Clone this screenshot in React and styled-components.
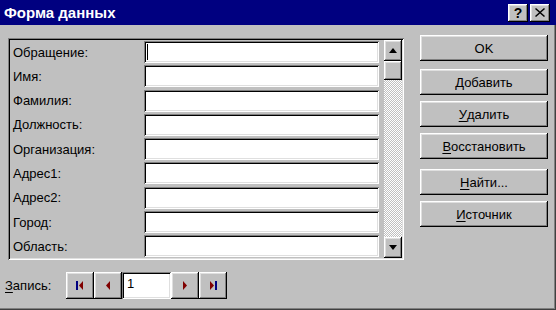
import React from 'react';
import styled, {createGlobalStyle} from 'styled-components';

const GlobalStyle = createGlobalStyle`
  html, body {
    margin: 0;
    padding: 0;
    background: #c0c0c0;
  }
  body {
    font-family: "Liberation Sans", Arial, sans-serif;
  }
`;

// classic 3D bevels
const raised = `
  box-shadow: inset -1px -1px #000, inset 1px 1px #fff, inset -2px -2px #808080, inset 2px 2px #dfdfdf;
`;
const sunken = `
  box-shadow: inset 1px 1px #808080, inset -1px -1px #fff, inset 2px 2px #000, inset -2px -2px #dfdfdf;
`;

const Window = styled.div`
  width: 556px;
  height: 310px;
  box-sizing: border-box;
  background: #c0c0c0;
  display: flex;
  flex-direction: column;
  box-shadow: inset -1px -1px #404040, inset -2px -2px #808080;
  overflow: hidden;
`;

const TitleBar = styled.div`
  height: 25px;
  flex: none;
  display: flex;
  align-items: center;
  padding: 0 6px 0 4px;
  background: #000080;
  color: #fff;
  font-weight: bold;
  font-size: 15px;
`;

const TitleText = styled.div`
  flex: 1;
`;

const TitleBtn = styled.div`
  width: 20px;
  height: 18px;
  margin-left: 2px;
  background: #c0c0c0;
  ${raised};
  display: flex;
  align-items: center;
  justify-content: center;
  color: #000;
  font-weight: bold;
  font-size: 14px;
`;

const Body = styled.div`
  display: flex;
  padding: 10px 0 0 8px;
`;

const LeftCol = styled.div`
  width: 396px;
  display: flex;
  flex-direction: column;
`;

const Panel = styled.div`
  margin-top: 3px;
  width: 396px;
  height: 222px;
  box-sizing: border-box;
  padding: 2px;
  ${sunken};
  display: flex;
`;

const FieldArea = styled.div`
  flex: 1;
  padding: 1px 5px 0 3px;
  overflow: hidden;
`;

const Row = styled.div`
  display: flex;
  align-items: center;
  height: 22px;
  margin-bottom: 2.3px;
`;

const Label = styled.div`
  width: 131px;
  font-size: 13px;
  color: #000;
`;

const Field = styled.div`
  width: 235px;
  height: 22px;
  box-sizing: border-box;
  background: #fff;
  ${sunken};
  padding: 3px 3px;
  display: flex;
`;

const Caret = styled.div`
  width: 1px;
  background: #000;
`;

const ScrollBar = styled.div`
  width: 18px;
  display: flex;
  flex-direction: column;
`;

const ScrollBtn = styled.div`
  height: ${p => p.h}px;
  flex: none;
  box-sizing: border-box;
  background: #c0c0c0;
  ${raised};
  display: flex;
  align-items: center;
  justify-content: center;
`;

const Track = styled.div`
  flex: 1;
  background-image: repeating-conic-gradient(#c0c0c0 0 25%, #fff 0 50%);
  background-size: 2px 2px;
`;

const RightCol = styled.div`
  margin-left: 16px;
  width: 128px;
  display: flex;
  flex-direction: column;
`;

const Button = styled.div`
  height: 26px;
  box-sizing: border-box;
  margin-top: ${p => p.gap}px;
  background: #c0c0c0;
  ${raised};
  display: flex;
  align-items: center;
  justify-content: center;
  font-size: 13px;
  color: #000;
`;

const Mn = styled.span`
  text-decoration: underline;
  text-underline-offset: 2px;
`;

const RecordRow = styled.div`
  display: flex;
  align-items: center;
  margin: 12px 0 0 -3px;
  height: 27px;
`;

const RecordLabel = styled.div`
  width: 61px;
  font-size: 13px;
  color: #000;
`;

const NavBtn = styled.div`
  width: 28px;
  height: 27px;
  box-sizing: border-box;
  background: #c0c0c0;
  ${raised};
  display: flex;
  align-items: center;
  justify-content: center;
`;

const RecordInput = styled.div`
  width: 49px;
  height: 27px;
  box-sizing: border-box;
  background: #fff;
  ${sunken};
  padding: 4px 5px;
  font-size: 13px;
  color: #000;
`;

const labels = ['Обращение:', 'Имя:', 'Фамилия:', 'Должность:', 'Организация:', 'Адрес1:', 'Адрес2:', 'Город:', 'Область:'];

const NAVY = '#000080';
const MAROON = '#800000';

function NavIcon({kind}) {
  return (
    <svg width="10" height="9" viewBox="0 0 10 9">
      {kind === 'first' && <>
        <rect x="1" y="0" width="2" height="9" fill={NAVY}/>
        <polygon points="8,0 4,4.5 8,9" fill={MAROON}/>
      </>}
      {kind === 'prev' && <polygon points="7,0 3,4.5 7,9" fill={MAROON}/>}
      {kind === 'next' && <polygon points="3,0 7,4.5 3,9" fill={MAROON}/>}
      {kind === 'last' && <>
        <polygon points="2,0 6,4.5 2,9" fill={MAROON}/>
        <rect x="7" y="0" width="2" height="9" fill={NAVY}/>
      </>}
    </svg>
  );
}

export default function App() {
  return (
    <>
      <GlobalStyle/>
      <Window>
        <TitleBar>
          <TitleText>Форма данных</TitleText>
          <TitleBtn>?</TitleBtn>
          <TitleBtn>
            <svg width="10" height="9" viewBox="0 0 10 9">
              <path d="M1 0 L5 3.5 L9 0 L10 1 L6 4.5 L10 8 L9 9 L5 5.5 L1 9 L0 8 L4 4.5 L0 1 Z" fill="#000"/>
            </svg>
          </TitleBtn>
        </TitleBar>
        <Body>
          <LeftCol>
            <Panel>
              <FieldArea>
                {labels.map((l, i) => (
                  <Row key={l}>
                    <Label>{l}</Label>
                    <Field>{i === 0 && <Caret/>}</Field>
                  </Row>
                ))}
              </FieldArea>
              <ScrollBar>
                <ScrollBtn h={21}>
                  <svg width="8" height="5" viewBox="0 0 8 5"><polygon points="0,5 4,0 8,5" fill="#000"/></svg>
                </ScrollBtn>
                <ScrollBtn h={19}/>
                <Track/>
                <ScrollBtn h={21}>
                  <svg width="8" height="5" viewBox="0 0 8 5"><polygon points="0,0 8,0 4,5" fill="#000"/></svg>
                </ScrollBtn>
              </ScrollBar>
            </Panel>
            <RecordRow>
              <RecordLabel><Mn>З</Mn>апись:</RecordLabel>
              <NavBtn><NavIcon kind="first"/></NavBtn>
              <NavBtn><NavIcon kind="prev"/></NavBtn>
              <RecordInput>1</RecordInput>
              <NavBtn><NavIcon kind="next"/></NavBtn>
              <NavBtn><NavIcon kind="last"/></NavBtn>
            </RecordRow>
          </LeftCol>
          <RightCol>
            <Button gap={0}>OK</Button>
            <Button gap={8}><Mn>Д</Mn>обавить</Button>
            <Button gap={6}><Mn>У</Mn>далить</Button>
            <Button gap={6}><Mn>В</Mn>осстановить</Button>
            <Button gap={10}><Mn>Н</Mn>айти...</Button>
            <Button gap={6}><Mn>И</Mn>сточник</Button>
          </RightCol>
        </Body>
      </Window>
    </>
  );
}
